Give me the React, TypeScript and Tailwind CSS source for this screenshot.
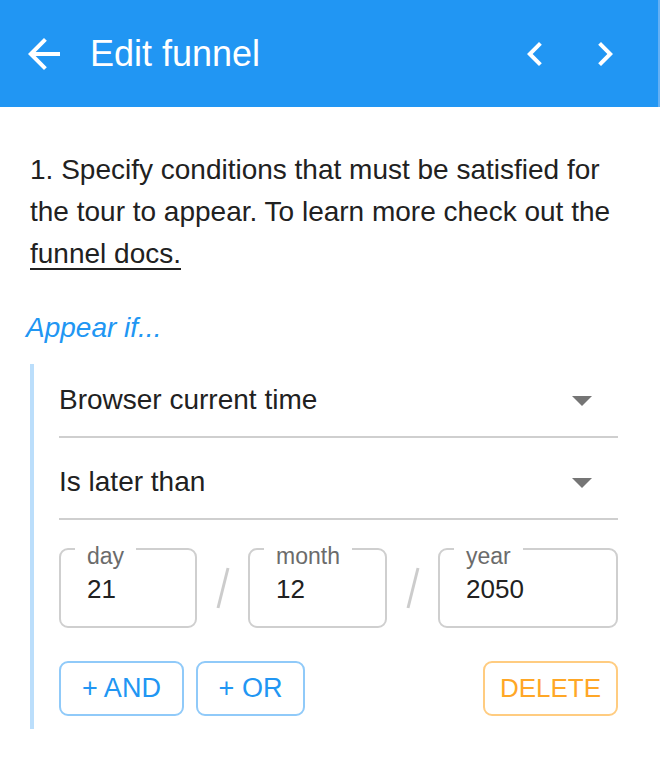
const FONT = { fontFamily: '"Liberation Sans", Arial, Helvetica, sans-serif' }

// material-style icons, the header uses the filled 24px set
function MdIcon({ d, className = '' }: { d: string; className?: string }) {
  return (
    <svg viewBox="0 0 24 24" className={`shrink-0 ${className}`}>
      <path d={d} fill="currentColor" />
    </svg>
  )
}

const ICON_BACK = 'M20 11H7.83l5.59-5.59L12 4l-8 8 8 8 1.41-1.41L7.83 13H20v-2z'
const ICON_PREV = 'M15.41 7.41L14 6l-6 6 6 6 1.41-1.41L10.83 12z'
const ICON_NEXT = 'M10 6L8.59 7.41 13.17 12l-4.58 4.59L10 18l6-6z'
const ICON_DROP = 'M7 10l5 5 5-5z'

function Select({ value, className = '' }: { value: string; className?: string }) {
  return (
    <div className={`flex h-[72px] items-center justify-between border-b-2 border-[#cfcfcf] box-content ${className}`}>
      <span className="text-[28px] text-[#212121]">{value}</span>
      <MdIcon d={ICON_DROP} className="mr-[12px] w-[48px] h-[48px] text-[#757575]" />
    </div>
  )
}

function DateBox({ label, value, className = '' }: { label: string; value: string; className?: string }) {
  return (
    <div className={`relative flex h-[80px] items-center rounded-[9px] border-2 border-[#cfcfcf] pl-[26px] ${className}`}>
      <span className="absolute -top-[5px] left-[14px] bg-white px-[12px] text-[23px] leading-none text-[#6b6b6b]">
        {label}
      </span>
      <span className="pt-[2px] text-[26px] text-[#212121]">{value}</span>
    </div>
  )
}

function Slash() {
  return (
    <div className="flex w-[51px] shrink-0 items-center justify-center">
      <svg viewBox="0 0 16 44" className="w-[16px] h-[44px]">
        <line x1="13" y1="2" x2="3" y2="42" stroke="#cccccc" strokeWidth="3" />
      </svg>
    </div>
  )
}

export default function App() {
  return (
    <div className="w-[660px] min-h-[760px] bg-white" style={FONT}>
      {/* header */}
      <header className="flex h-[107px] items-center bg-[#2196f3] border-r-2 border-[#64b0f4] pl-[20px] pr-[29px] text-white">
        <MdIcon d={ICON_BACK} className="w-[48px] h-[48px]" />
        <h1 className="ml-[22px] text-[36px] font-medium">Edit funnel</h1>
        <div className="flex-1" />
        <MdIcon d={ICON_PREV} className="w-[48px] h-[48px]" />
        <MdIcon d={ICON_NEXT} className="ml-[22px] w-[48px] h-[48px]" />
      </header>

      <main className="px-[30px] pt-[42px]">
        <p className="text-[28px] leading-[42px] text-[#212121]">
          1. Specify conditions that must be satisfied for the tour to appear. To learn more check out the{' '}
          <a className="underline underline-offset-[5px] decoration-[2px]">funnel docs.</a>
        </p>

        <p className="-ml-[4px] mt-[32px] text-[28px] italic leading-[42px] text-[#2196f3]">Appear if...</p>

        <section className="mt-[15px] border-l-4 border-[#bbdefb] pl-[25px] pr-[12px] pb-[13px]">
          <Select value="Browser current time" />
          <Select value="Is later than" className="mt-[8px]" />

          <div className="mt-[28px] flex">
            <DateBox label="day" value="21" className="w-[138px]" />
            <Slash />
            <DateBox label="month" value="12" className="w-[139px]" />
            <Slash />
            <DateBox label="year" value="2050" className="flex-1" />
          </div>

          <div className="mt-[33px] flex items-center">
            <button className="h-[55px] w-[125px] rounded-[9px] border-2 border-[#90caf9] text-[27px] text-[#2196f3]">
              + AND
            </button>
            <button className="ml-[12px] h-[55px] w-[109px] rounded-[9px] border-2 border-[#90caf9] text-[27px] text-[#2196f3]">
              + OR
            </button>
            <div className="flex-1" />
            <button className="h-[55px] w-[135px] rounded-[9px] border-2 border-[#ffcc80] text-[26px] text-[#ffa726]">
              DELETE
            </button>
          </div>
        </section>
      </main>
    </div>
  )
}
